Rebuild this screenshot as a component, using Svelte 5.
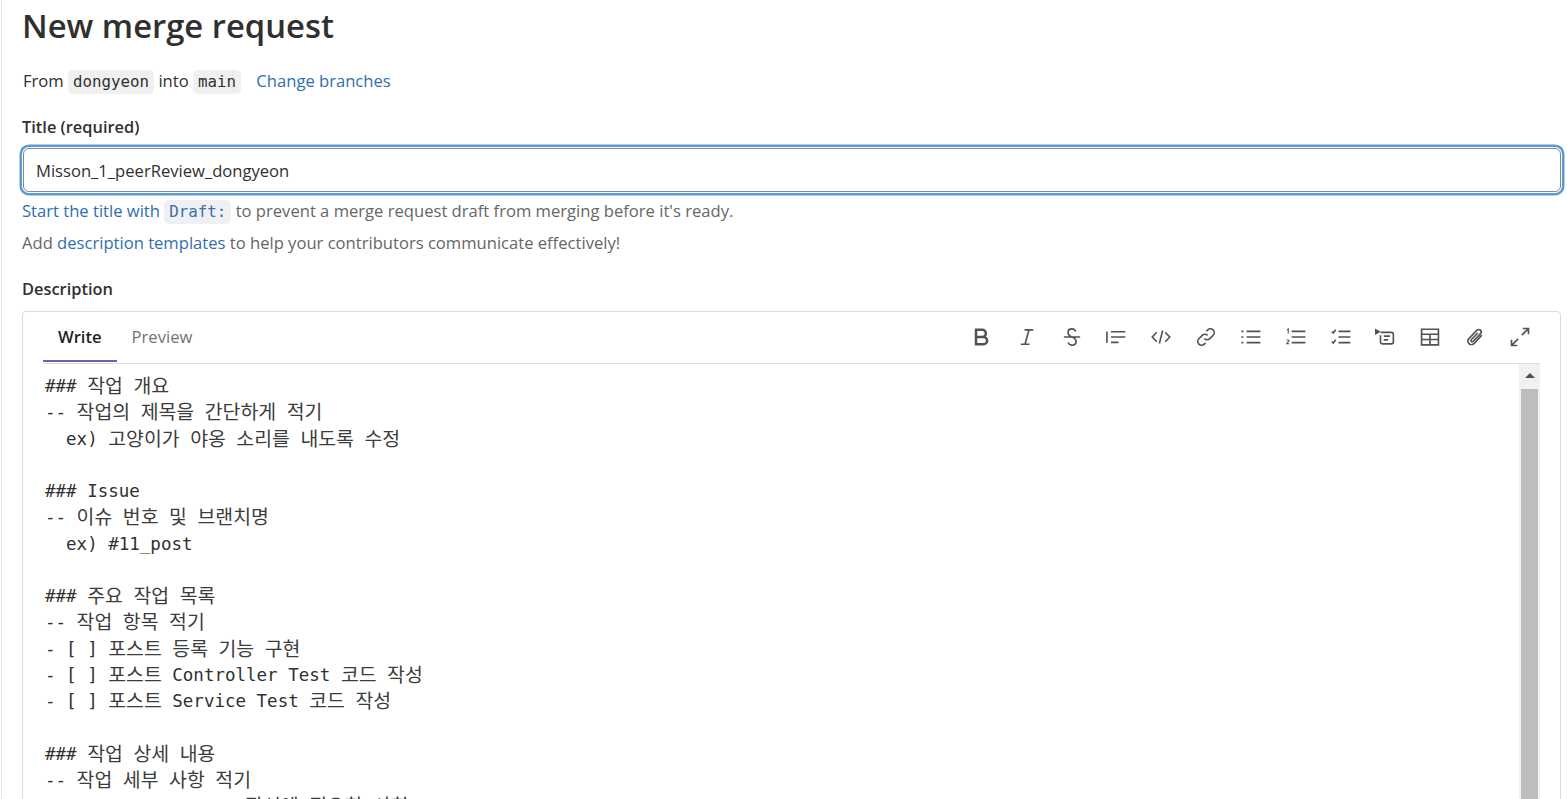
<script>
  const body = `### 작업 개요
-- 작업의 제목을 간단하게 적기
  ex) 고양이가 야옹 소리를 내도록 수정

### Issue
-- 이슈 번호 및 브랜치명
  ex) #11_post

### 주요 작업 목록
-- 작업 항목 적기
- [ ] 포스트 등록 기능 구현
- [ ] 포스트 Controller Test 코드 작성
- [ ] 포스트 Service Test 코드 작성

### 작업 상세 내용
-- 작업 세부 사항 적기
                   작성에 필요한 사항`;

  // hangul runs are set a bit larger, the reference uses a wider korean face
  const parts = body.split(/([가-힣]+)/);
</script>

<div class="page">
  <h1>New merge request</h1>
  <p class="branches">
    From <code>dongyeon</code> into <code>main</code>
    <a href="#change" class="change">Change branches</a>
  </p>

  <label class="field-label" for="title">Title (required)</label>
  <input id="title" class="title-input" value="Misson_1_peerReview_dongyeon" />
  <p class="hint first"><a href="#draft">Start the title with <code class="draft">Draft:</code></a> to prevent a merge request draft from merging before it's ready.</p>
  <p class="hint">Add <a href="#templates">description templates</a> to help your contributors communicate effectively!</p>

  <div class="field-label desc-label">Description</div>
  <div class="editor">
    <div class="editor-head">
      <div class="tabs">
        <span class="tab active">Write</span>
        <span class="tab">Preview</span>
      </div>
      <div class="tools">
        <!-- bold -->
        <svg viewBox="0 0 16 16"><path class="heavy" d="M3.2 2.2h5a2.9 2.9 0 0 1 0 5.8h-5zM3.2 8h6a2.9 2.9 0 0 1 0 5.8h-6z"/></svg>
        <!-- italic -->
        <svg viewBox="0 0 16 16"><path d="M6 2.25h7M3 13.75h7M9.6 2.25 6.4 13.75"/></svg>
        <!-- strikethrough -->
        <svg viewBox="0 0 16 16"><path d="M1.5 8h13M11 3.6C10.4 2.4 9.3 1.5 8 1.5c-1.8 0-3.2 1.1-3.2 2.9 0 1.7 1.4 2.8 3.2 3.6 1.9.8 3.3 1.8 3.3 3.6 0 1.8-1.5 2.9-3.3 2.9-1.4 0-2.6-.9-3.2-2.1"/></svg>
        <!-- quote -->
        <svg viewBox="0 0 16 16"><path d="M.75 3.5v9M4 3.75h11.5M4 8h11.5M4 12.25h6"/></svg>
        <!-- code -->
        <svg viewBox="0 0 16 16"><path d="M4.6 4.2 1 8l3.6 3.8M11.4 4.2 15 8l-3.6 3.8M9.3 2.8 6.7 13.2"/></svg>
        <!-- link -->
        <svg viewBox="0 0 16 16"><path d="M6.7 9.3a3 3 0 0 0 4.3 0l2.7-2.7a3 3 0 0 0-4.3-4.3L8.3 3.4M9.3 6.7a3 3 0 0 0-4.3 0L2.3 9.4a3 3 0 0 0 4.3 4.3l1.1-1.1"/></svg>
        <!-- bullet list -->
        <svg viewBox="0 0 16 16"><path d="M4.5 3.5h11M4.5 8h11M4.5 12.5h11M.3 3.5h1.6M.3 8h1.6M.3 12.5h1.6"/></svg>
        <!-- numbered list -->
        <svg viewBox="0 0 16 16"><path d="M4.5 3.5h11M4.5 8h11M4.5 12.5h11"/><path class="thin" d="M.8 2.2 1.8 1.6v3.6M.6 10.8c.3-.6 1.7-.6 1.8.2 0 .8-1.4 1.3-1.9 2.4h2.1"/></svg>
        <!-- task list -->
        <svg viewBox="0 0 16 16"><path d="M6 3.5h9.5M6 8h9.5M6 12.5h9.5"/><path d="M.6 3.6 1.8 4.8 3.8 2.2M.6 11.6 1.8 12.8 3.8 10.2"/></svg>
        <!-- collapsible section -->
        <svg viewBox="0 0 16 16"><path class="solid" d="M0 1.2 4.6 3.8 0 6.4z"/><path d="M4.5 4.25h8.6c1 0 1.6.6 1.6 1.5v6.2c0 .9-.6 1.5-1.6 1.5H6c-1 0-1.6-.6-1.6-1.5V6.5M7 7.25h5M7 10.25h3.5"/></svg>
        <!-- table -->
        <svg viewBox="0 0 16 16"><path d="M1.25 1.75h13.5v12.5H1.25zM1.25 5.75h13.5M1.25 10h13.5M8 5.75v8.5"/></svg>
        <!-- attach -->
        <svg viewBox="0 0 16 16"><path d="M13.5 6.5 7.6 12.9c-1.4 1.4-3.3 1.5-4.4.4-1.1-1.1-1-3 .3-4.4l5.9-6.2c.9-.9 2.2-1 3-.2.8.8.7 2.1-.2 3l-5.6 5.9c-.5.5-1.1.5-1.5.1-.4-.4-.3-1 .1-1.5l5-5.2"/></svg>
        <!-- fullscreen -->
        <svg viewBox="0 0 16 16"><path d="M9.5 6.5 14.5 1.5M10.2 1.2h4.6v4.6M6.5 9.5 1.5 14.5M1.2 10.2v4.6h4.6"/></svg>
      </div>
    </div>
    <div class="text-wrap">
      <pre class="text">{#each parts as part, i}{#if i % 2}<span class="ko">{part}</span>{:else}{part}{/if}{/each}</pre>
      <div class="scrollbar">
        <div class="arrow"></div>
        <div class="thumb"></div>
      </div>
    </div>
  </div>
</div>

<style>
  :global(body) {
    margin: 0;
    background: #fff;
    overflow: hidden;
  }

  .page {
    height: 799px;
    overflow: hidden;
    box-sizing: border-box;
    margin-left: 1px;
    padding: 0 6px 0 20px;
    border-left: 1px solid #e6e6e6;
    font-family: "Open Sans", "Noto Sans", sans-serif;
    font-size: 16.6px;
    color: #303030;
  }

  h1 {
    margin: 0;
    padding-top: 4px;
    font-size: 32.8px;
    line-height: 43px;
    font-weight: 600;
    color: #303030;
  }

  code {
    display: inline-block;
    font-family: "DejaVu Sans Mono", monospace;
    font-size: 15.8px;
    line-height: 24px;
    background: #f0f0f0;
    border-radius: 5px;
    padding: 0 5px;
  }

  a {
    color: #2f6fb0;
    text-decoration: none;
  }

  .branches {
    height: 24px;
    margin: 22px 0 0 1px;
    line-height: 24px;
  }

  .change {
    margin-left: 11px;
  }

  .field-label {
    display: block;
    height: 24px;
    margin-top: 22px;
    font-size: 16.4px;
    line-height: 24px;
    font-weight: 600;
  }

  .title-input {
    display: block;
    box-sizing: border-box;
    width: calc(100% - 1px);
    height: 44px;
    margin: 9px 0 0 1px;
    padding: 0 12px;
    border: 1px solid #868686;
    border-radius: 6px;
    box-shadow: 0 0 0 1px #fff, 0 0 0 3.5px #5b9bd5;
    outline: none;
    font: inherit;
    color: #303030;
  }

  .hint {
    height: 24px;
    margin: 8px 0 0;
    line-height: 24px;
    color: #666;
  }

  .hint.first {
    margin-top: 7px;
  }

  .draft {
    background: #eef0f4;
    color: #3a6fa8;
  }

  .editor {
    margin-top: 10px;
    border: 1px solid #dcdcde;
    border-radius: 4px 4px 0 0;
    padding: 0 20px;
    height: 600px;
  }

  .editor-head {
    display: flex;
    justify-content: space-between;
    height: 51px;
    border-bottom: 1px solid #dcdcde;
  }

  .tabs {
    display: flex;
  }

  .tab {
    padding: 13px 15px 0;
    color: #737278;
  }

  .tab.active {
    color: #1f1e24;
    font-weight: 600;
    border-bottom: 2px solid #6666b8;
    height: 35px;
  }

  .tools {
    display: flex;
    gap: 24.85px;
    padding: 15px 10px 0 0;
  }

  .tools svg {
    width: 20px;
    height: 20px;
    fill: none;
    stroke: #535158;
    stroke-width: 1.3;
  }

  .tools .solid {
    fill: #535158;
    stroke: none;
  }

  .tools .thin {
    stroke-width: 0.9;
  }

  .tools .heavy {
    stroke-width: 2;
  }

  .text-wrap {
    display: flex;
    justify-content: space-between;
  }

  .text {
    margin: 0;
    padding: 9px 0 0 2px;
    font-family: "DejaVu Sans Mono", "Noto Sans CJK KR", monospace;
    font-size: 17.5px;
    line-height: 26.25px;
    color: #303030;
  }

  .ko {
    font-family: "Noto Sans CJK KR", sans-serif;
    font-size: 19.4px;
    line-height: 0;
    vertical-align: -1px;
    color: #3c3c3c;
  }

  .scrollbar {
    width: 21px;
    height: 440px;
    background: #f1f1f1;
  }

  .arrow {
    width: 0;
    height: 0;
    margin: 9px auto 11px;
    border: 5px solid transparent;
    border-top: 0;
    border-bottom: 5px solid #505050;
  }

  .thumb {
    width: 17px;
    height: 420px;
    margin: 0 2px;
    background: #bdbdbd;
  }
</style>
